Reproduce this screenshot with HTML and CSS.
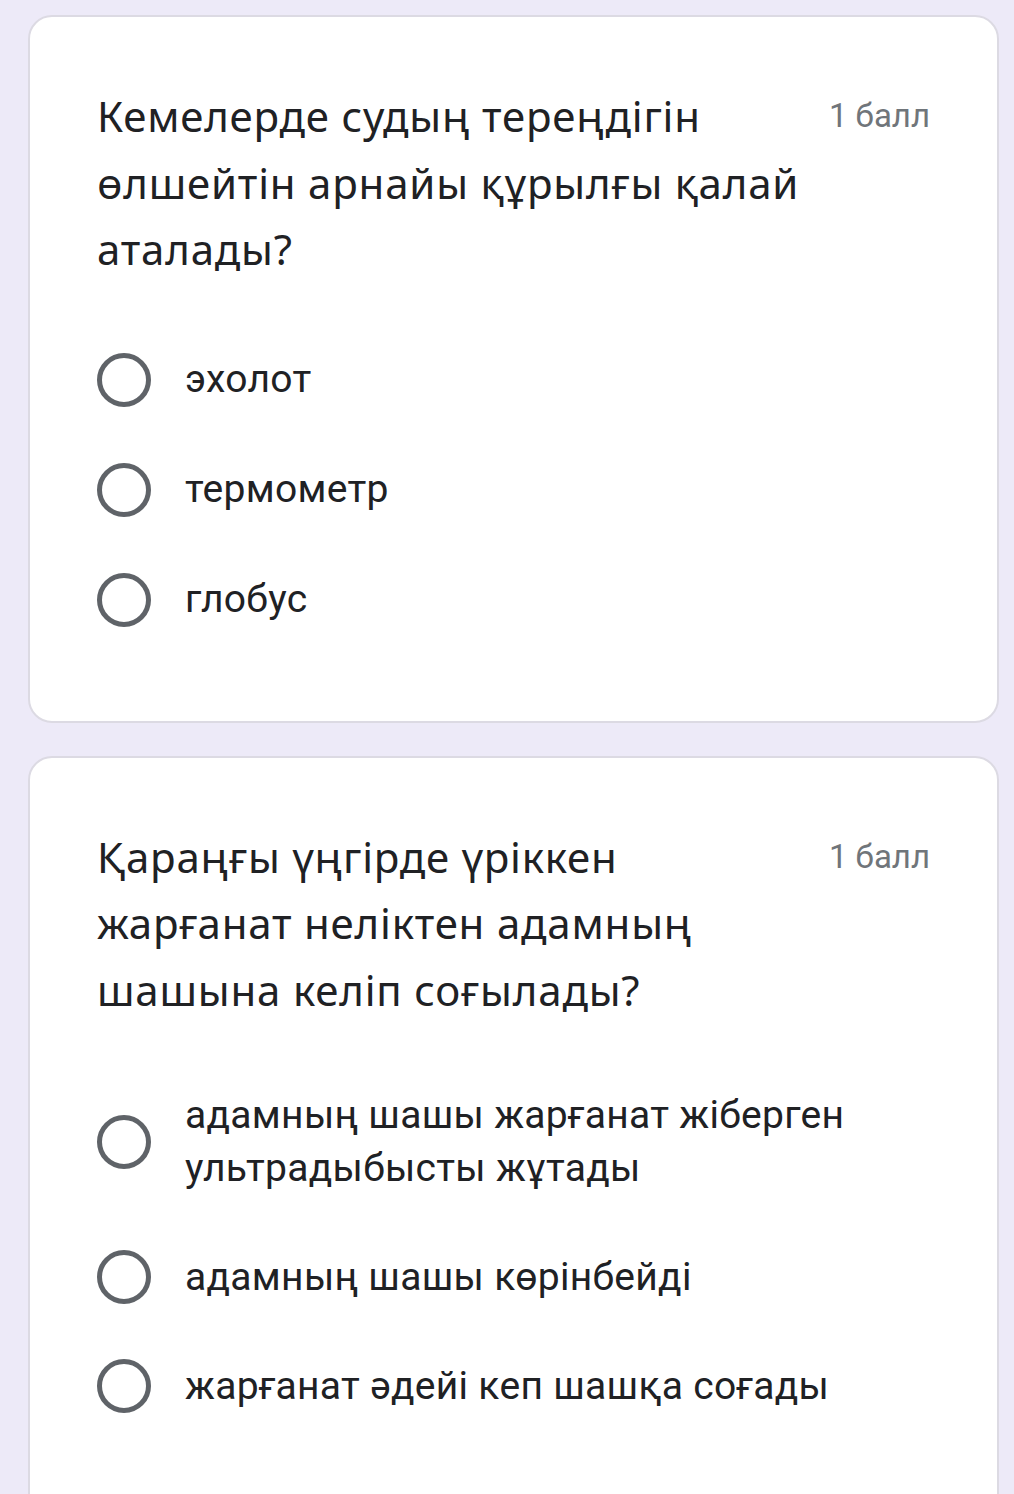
FILE: index.html
```html
<!DOCTYPE html>
<html lang="kk">
<head>
<meta charset="utf-8">
<title>Сұрақтар</title>
<link rel="stylesheet" href="styles.css">
</head>
<body>
<main class="page">
  <section class="card card-first">
    <div class="q-head">
      <h2 class="q-title">Кемелерде судың тереңдігін<br>өлшейтін арнайы құрылғы қалай<br>аталады?</h2>
      <span class="q-points">1 балл</span>
    </div>
    <ul class="options">
      <li class="option"><span class="radio"></span><span class="opt-text">эхолот</span></li>
      <li class="option"><span class="radio"></span><span class="opt-text">термометр</span></li>
      <li class="option"><span class="radio"></span><span class="opt-text">глобус</span></li>
    </ul>
  </section>
  <section class="card card-second">
    <div class="q-head">
      <h2 class="q-title">Қараңғы үңгірде үріккен<br>жарғанат неліктен адамның<br>шашына келіп соғылады?</h2>
      <span class="q-points">1 балл</span>
    </div>
    <ul class="options">
      <li class="option"><span class="radio"></span><span class="opt-text">адамның шашы жарғанат жіберген<br>ультрадыбысты жұтады</span></li>
      <li class="option"><span class="radio"></span><span class="opt-text">адамның шашы көрінбейді</span></li>
      <li class="option"><span class="radio"></span><span class="opt-text">жарғанат әдейі кеп шашқа соғады</span></li>
    </ul>
  </section>
</main>
</body>
</html>
```
FILE: styles.css
```css
html, body {
  margin: 0;
  padding: 0;
  height: 1494px;
  overflow: hidden;
  background: #edeaf8;
}

.page {
  display: flex;
  flex-direction: column;
  gap: 33px;
  padding: 15px 15px 0 28px;
}

.card {
  background: #ffffff;
  border: 2px solid #dcdae3;
  border-radius: 24px;
  padding: 66px 67px 94px 67px;
}

.card-second {
  padding-top: 66px;
  padding-bottom: 200px;
}

.q-head {
  display: flex;
  align-items: flex-start;
  justify-content: space-between;
  gap: 24px;
}

.q-title {
  margin: 0;
  font-family: "Noto Sans", "Open Sans", sans-serif;
  font-weight: 400;
  font-size: 42px;
  line-height: 66.5px;
  letter-spacing: 0.8px;
  white-space: nowrap;
  color: #202124;
}

.q-points {
  font-family: Roboto, "Noto Sans", sans-serif;
  font-size: 33px;
  line-height: 66.5px;
  color: #70757a;
  white-space: nowrap;
}

.options {
  list-style: none;
  margin: 70px 0 0 0;
  padding: 0;
  display: flex;
  flex-direction: column;
  gap: 56px;
}

.card-second .options {
  margin-top: 66px;
  gap: 55px;
}

.option {
  display: flex;
  align-items: center;
  gap: 34px;
  min-height: 54px;
}

.radio {
  flex: none;
  box-sizing: border-box;
  width: 54px;
  height: 54px;
  border: 5px solid #5f6368;
  border-radius: 50%;
}

.opt-text {
  font-family: Roboto, "Noto Sans", sans-serif;
  font-size: 39px;
  line-height: 53px;
  letter-spacing: 0.3px;
  color: #202124;
}
```
